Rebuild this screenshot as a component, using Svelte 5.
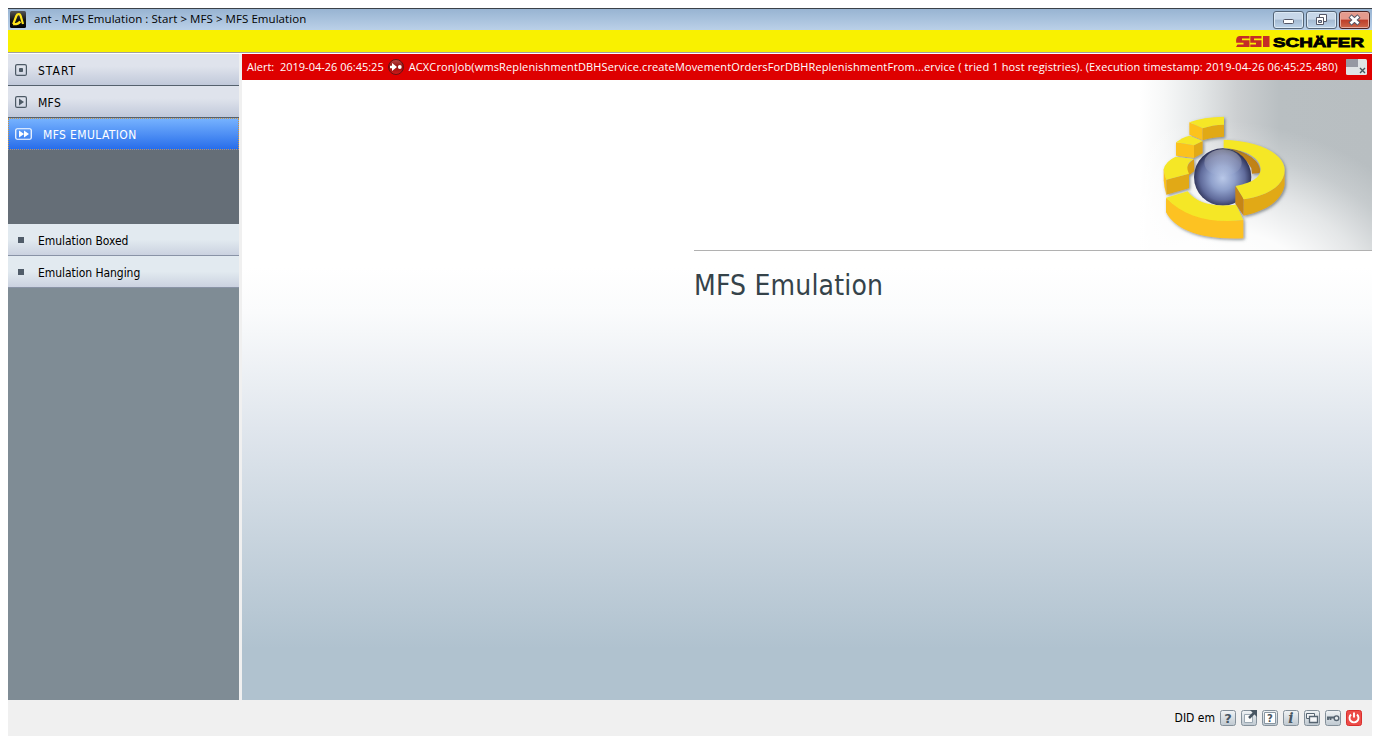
<script>
  const nav = [
    { label: 'START', kind: 'dot' },
    { label: 'MFS', kind: 'play' },
    { label: 'MFS EMULATION', kind: 'fast' }
  ];
  const entries = ['Emulation Boxed', 'Emulation Hanging'];
  const tools = ['help', 'open', 'context', 'info', 'windows', 'key', 'power'];
</script>

<div class="window">
  <header class="title">
    <svg class="app" width="16" height="17" viewBox="0 0 16 17">
      <defs><linearGradient id="ab" x1="0" y1="0" x2="0" y2="1"><stop offset="0" stop-color="#555" /><stop offset=".5" stop-color="#171717" /><stop offset="1" stop-color="#000" /></linearGradient></defs>
      <rect width="16" height="17" rx="1.5" fill="url(#ab)" />
      <path d="M3.200 13.200L6.300 5Q7.200 3 9 3.200Q10.200 3.400 10.700 5L13 13M3 13.200Q8 13.600 10.300 10.500" fill="none" stroke="#ffe51b" stroke-width="2.200" />
    </svg>
    <span class="caption">ant - MFS Emulation : Start &gt; MFS &gt; MFS Emulation</span>
    <div class="controls">
      <button aria-label="Minimize"><svg width="29" height="16" viewBox="0 0 29 16"><rect x="9.5" y="7.5" width="10" height="4" rx="1" fill="#fff" stroke="#535666" /></svg></button>
      <button aria-label="Restore"><svg width="29" height="16" viewBox="0 0 29 16"><path d="M12.500 2.500h7v7h-7z" fill="#fff" stroke="#535666" /><path d="M9.500 5.500h7v7h-7z" fill="#fff" stroke="#535666" /><path d="M11.500 8.500h3v2h-3z" fill="#b8cade" stroke="#535666" /></svg></button>
      <button class="close" aria-label="Close"><svg width="29" height="16" viewBox="0 0 29 16"><path d="M10 4l9 8M19 4l-9 8" stroke="#535666" stroke-width="4.600" /><path d="M10.600 4.500l7.800 7M18.400 4.500l-7.800 7" stroke="#fff" stroke-width="2.600" /></svg></button>
    </div>
  </header>

  <div class="brand">
    <svg width="130" height="16" viewBox="0 0 130 16">
      <path d="M4.500 2H14.500V4.500H7V6.200H14.500V13H1L2.500 10.500H8.500V8.700H1.200Q.5 2 4.500 2ZM15.300 2H26.500V4.500H19V6.200H26.500V13H15.300V10.500H21V8.700H15.300ZM28 2H34.500V13H28Z" fill="#c52d27" />
      <text x="38" y="12.500" textLength="91" lengthAdjust="spacingAndGlyphs">SCHÄFER</text>
    </svg>
  </div>

  <div class="body">
    <aside>
      {#each nav as item}
        <div class="nav {item.kind}">
          {#if item.kind === 'fast'}
            <svg width="18" height="12" viewBox="0 0 18 12"><rect x=".75" y=".75" width="15.500" height="10.500" rx="1.500" fill="none" stroke="#fff" stroke-width="1.200" /><path d="M4 2.500l5 3.500-5 3.500zM9 2.500l5 3.500-5 3.500z" fill="#fff" /></svg>
          {:else}
            <svg width="12" height="12" viewBox="0 0 12 12"><rect x=".6" y=".6" width="10.800" height="10.800" rx="1.500" fill="none" stroke="#4d5a66" stroke-width="1.200" />
              {#if item.kind === 'dot'}<rect x="4" y="4" width="4" height="4" rx=".8" fill="#4d5a66" />{:else}<path d="M4 2.500l5 3.500-5 3.500z" fill="#4d5a66" />{/if}</svg>
          {/if}
          <span>{item.label}</span>
        </div>
      {/each}
      <div class="spacer"></div>
      {#each entries as label}
        <div class="entry"><i></i><span>{label}</span></div>
      {/each}
    </aside>

    <main>
      <div class="alert">
        <span class="stamp">Alert:&nbsp; 2019-04-26 06:45:25</span>
        <svg width="16" height="16" viewBox="0 0 16 16"><defs><linearGradient id="al" x1="0" y1="0" x2="0" y2="1"><stop offset="0" stop-color="#ba4947" /><stop offset=".5" stop-color="#920f0f" /><stop offset="1" stop-color="#d51b1b" /></linearGradient></defs><circle cx="8" cy="8" r="7.500" fill="url(#al)" stroke="#641313" /><path d="M2 6.800h2V4l5 4-5 4V9.200H2z" fill="#fff" /><circle cx="11.800" cy="8" r="1.900" fill="#fff" /></svg>
        <span class="message">ACXCronJob(wmsReplenishmentDBHService.createMovementOrdersForDBHReplenishmentFrom...ervice ( tried 1 host registries). (Execution timestamp: 2019-04-26 06:45:25.480)</span>
        <svg class="dismiss" width="21" height="16" viewBox="0 0 21 16"><rect width="21" height="16" rx="1.500" fill="#dfe3e4" /><path d="M1 0h11v8H0V1z" fill="#9699a2" /><path d="M14 9l5 5M19 9l-5 5" stroke="#46535b" stroke-width="1.400" /></svg>
      </div>
      <section class="hero">
        <svg width="232" height="170" viewBox="0 0 696 510">
          <defs>
            <linearGradient id="fade" x1="0" x2="1"><stop offset="0" stop-color="#fff" /><stop offset=".1" stop-color="#f7f8f8" /><stop offset=".25" stop-color="#e5e8e9" /><stop offset=".42" stop-color="#cccfd1" /><stop offset=".6" stop-color="#b9bfc2" /><stop offset="1" stop-color="#b8bec1" /></linearGradient>
            <radialGradient id="glow" gradientUnits="userSpaceOnUse" cx="0" cy="0" r="1" gradientTransform="translate(300 640) rotate(14) scale(680 510)"><stop offset="0" stop-color="#fff" /><stop offset=".35" stop-color="#fff" stop-opacity=".95" /><stop offset=".6" stop-color="#fff" stop-opacity=".62" /><stop offset=".82" stop-color="#fff" stop-opacity=".2" /><stop offset="1" stop-color="#fff" stop-opacity="0" /></radialGradient>
            <radialGradient id="ball" cx=".5" cy=".52" r=".52"><stop offset="0" stop-color="#b9c8e8" /><stop offset=".4" stop-color="#90a1cc" /><stop offset=".75" stop-color="#606b9b" /><stop offset="1" stop-color="#292d51" /></radialGradient>
            <linearGradient id="shine" x1="0" y1="0" x2="0" y2="1"><stop offset="0" stop-color="#fff" stop-opacity=".4" /><stop offset="1" stop-color="#fff" stop-opacity="0" /></linearGradient>
            <filter id="shadow" x="-10%" y="-10%" width="125%" height="125%"><feDropShadow dx="4" dy="4" stdDeviation="4" flood-color="#4f5a5e" flood-opacity=".65" /></filter>
          </defs>
          <rect width="696" height="510" fill="url(#fade)" />
          <rect width="696" height="510" fill="url(#glow)" />
          <g filter="url(#shadow)">
            <path d="M148 127L188 145V181L148 164Z" fill="#fcc21f" />
            <path d="M188 145Q216 135 252 134V170Q214 172 188 181Z" fill="#e1a913" />
            <path d="M148 127Q190 111 252 110V134Q216 135 188 145Z" fill="#f5e728" />
            <path d="M108 187L162 196V234L108 227Z" fill="#fcc21f" />
            <path d="M162 196L188 183V220L162 234Z" fill="#e1a913" />
            <path d="M108 187Q126 172 149 167L188 183L162 196Z" fill="#f5e728" />
            <path d="M162 237Q128 260 147 286L163 274Z" fill="#dba113" />
            <path d="M71 265V301Q72 322 79 344V299Z" fill="#fcc21f" />
            <path d="M79 299L147 281V325L79 344Z" fill="#e1a913" />
            <path d="M71 268Q76 244 107 230L162 237Q132 252 147 281L79 299Q72 283 71 268Z" fill="#f5e728" />
            <path d="M251 199Q307 218 334 264L336 281L361 278Q363 225 251 199Z" fill="#c18314" />
          </g>
          <circle cx="248" cy="291" r="86" fill="url(#ball)" />
          <ellipse cx="249" cy="248" rx="56" ry="40" fill="url(#shine)" />
          <g filter="url(#shadow)">
            <path d="M78 353V397C104 446 177 481 310 475V420Q160 432 78 353Z" fill="#fdc220" />
            <path d="M78 353L143 334C170 371 221 382 289 374L310 420C216 431 133 412 78 353Z" fill="#f5e728" />
            <path d="M286 318L311 358V407L286 371Z" fill="#c68514" />
            <path d="M311 358C379 349 434 318 434 270V315C425 363 378 394 311 407Z" fill="#e1a913" />
            <path d="M251 179C354 182 434 220 434 270C434 318 379 349 311 358L287 318C346 306 362 287 362 266C360 229 307 207 251 204Z" fill="#f5e728" />
          </g>
        </svg>
      </section>
      <div class="welcome"><h1>MFS Emulation</h1></div>
    </main>
  </div>

  <footer>
    <span>DID em</span>
    {#each tools as tool}
      <svg width="16" height="16" viewBox="0 0 16 16">
        <defs><linearGradient id="tb" x1="0" y1="0" x2="0" y2="1"><stop offset="0" stop-color="#f1f4f6" /><stop offset="1" stop-color="#bec8d0" /></linearGradient></defs>
        <rect x=".5" y=".5" width="15" height="15" rx="2" fill={tool === 'power' ? '#ec4c48' : 'url(#tb)'} stroke={tool === 'power' ? '#d92f2d' : '#84909a'} />
        {#if tool === 'help'}<text x="8" y="12.500" class="glyph">?</text>
        {:else if tool === 'open'}<path d="M3.500 4.500h8v8h-8z" fill="#fafbfb" stroke="#9ba8b2" /><path d="M8 8l5-5" stroke="#485662" stroke-width="2.500" /><path d="M9 0h7v7z" fill="#485662" />
        {:else if tool === 'context'}<path d="M2.500 2.500h11v11h-11z" fill="#fff" stroke="#8a98a3" /><text x="8" y="12" class="glyph small">?</text>
        {:else if tool === 'info'}<text x="8" y="13" class="glyph info">i</text>
        {:else if tool === 'windows'}<path d="M2.500 3.500h8v5h-8z" fill="#f4f6f8" stroke="#566471" /><path d="M5.500 6.500h8v6h-8z" fill="#f4f6f8" stroke="#566471" stroke-width="1.300" />
        {:else if tool === 'key'}<circle cx="11.500" cy="8.200" r="2.300" fill="#e8edf0" stroke="#566471" stroke-width="1.400" /><path d="M2 7.500h7M3 8v2M5.500 8v2" stroke="#566471" stroke-width="1.800" />
        {:else}<path d="M5 4.500a4.500 4.500 0 1 0 6 0M8 2.500v5" fill="none" stroke="#fff" stroke-width="1.900" />{/if}
      </svg>
    {/each}
  </footer>
</div>

<style>
  :global(body) { margin: 0; background: #fff; }
  .window { box-sizing: border-box; width: 1380px; height: 744px; padding: 8px; display: flex; flex-direction: column; font: 12px "DejaVu Sans Condensed", "DejaVu Sans", sans-serif; font-stretch: condensed; color: #000; }
  svg { display: block; flex: none; }
  span { white-space: nowrap; }
  .title { box-sizing: border-box; height: 22px; flex: none; display: flex; align-items: center; border-top: 1px solid #3b4148; background: linear-gradient(#98b4d2, #bad0e8); padding: 0 2px; }
  .caption { margin-left: 8px; padding-bottom: 2px; font: 11.500px/18px "Open Sans", sans-serif; letter-spacing: .06px; }
  .controls { display: flex; gap: 2px; margin-left: auto; }
  button { box-sizing: border-box; width: 31px; height: 18px; padding: 0; border: 1px solid #536477; border-radius: 3px; background: linear-gradient(#c7d7e9 0 45%, #a4bad2 50%, #bdd3e9); box-shadow: inset 0 0 0 1px #dce9f5; }
  .close { background: linear-gradient(#e49a8d 0 45%, #bd3d29 50%, #cc684b); border-color: #4b2222; box-shadow: inset 0 0 0 1px #e6aa9e; }
  .brand { box-sizing: border-box; height: 24px; flex: none; display: flex; justify-content: flex-end; padding: 4px 7px 0 0; background: #f9f100; border-bottom: 1px solid #fff; box-shadow: inset 0 -1px #a0a0a0; }
  .brand text { font: 900 13px "Liberation Sans", sans-serif; stroke: #000; stroke-width: .8px; }
  .body { display: flex; height: 646px; flex: none; background: #f0f0f0; gap: 3px; }
  aside { width: 231px; flex: none; background: #7f8c95; }
  .nav, .entry { box-sizing: border-box; height: 32px; display: flex; align-items: center; padding-left: 7px; background: linear-gradient(#dfe3ec 0 40%, #c1c9da); border-bottom: 1px solid #55616d; }
  .nav span { margin-left: 11px; padding-top: 2px; letter-spacing: .3px; }
  .dot span { letter-spacing: 1px; }
  .nav.fast { padding-left: 6px; border: 1px dotted #c7944a; background: linear-gradient(#78b4ff, #256bea) border-box; color: #fff; }
  .nav.fast span { margin-left: 10px; letter-spacing: .38px; }
  .spacer { height: 74px; background: #656e77; }
  .entry { padding-left: 10px; background: linear-gradient(#e2eaf0 0 50%, #cbd2e0); border-bottom-color: #8993a6; }
  .entry i { width: 6px; height: 6px; background: #505c69; margin-right: 14px; }
  .entry span { padding-top: 2px; letter-spacing: -.05px; }
  main { flex: 1; min-width: 0; display: flex; flex-direction: column; background: linear-gradient(#fff 0 33%, #fafbfc 40%, #e0e6ed 58%, #b0c2cf 92%); }
  .alert { box-sizing: border-box; height: 26px; flex: none; display: flex; align-items: center; padding: 0 5px; background: #de0000; color: #fff; font: 11px "Open Sans", sans-serif; }
  .alert span { padding-bottom: 2px; }
  .message { margin-left: 5px; letter-spacing: .133px; }
  .alert svg { margin-left: 4px; }
  .alert .dismiss { margin-left: auto; }
  .hero { height: 170px; flex: none; display: flex; justify-content: flex-end; background: #fff; }
  .welcome { margin-left: 452px; border-top: 1px solid #b1b1b1; }
  h1 { margin: 18px 0 0; font: 28px/34px "DejaVu Sans Condensed", "DejaVu Sans", sans-serif; font-stretch: condensed; letter-spacing: .18px; color: #35434a; }
  footer { height: 36px; flex: none; display: flex; align-items: center; justify-content: flex-end; gap: 5px; padding-right: 10px; background: #f0f0f0; }
  .glyph { font: bold 13px "DejaVu Sans", sans-serif; fill: #485662; text-anchor: middle; }
  .small { font-size: 10px; }
  .info { font: italic bold 14px "DejaVu Serif", serif; }
</style>
